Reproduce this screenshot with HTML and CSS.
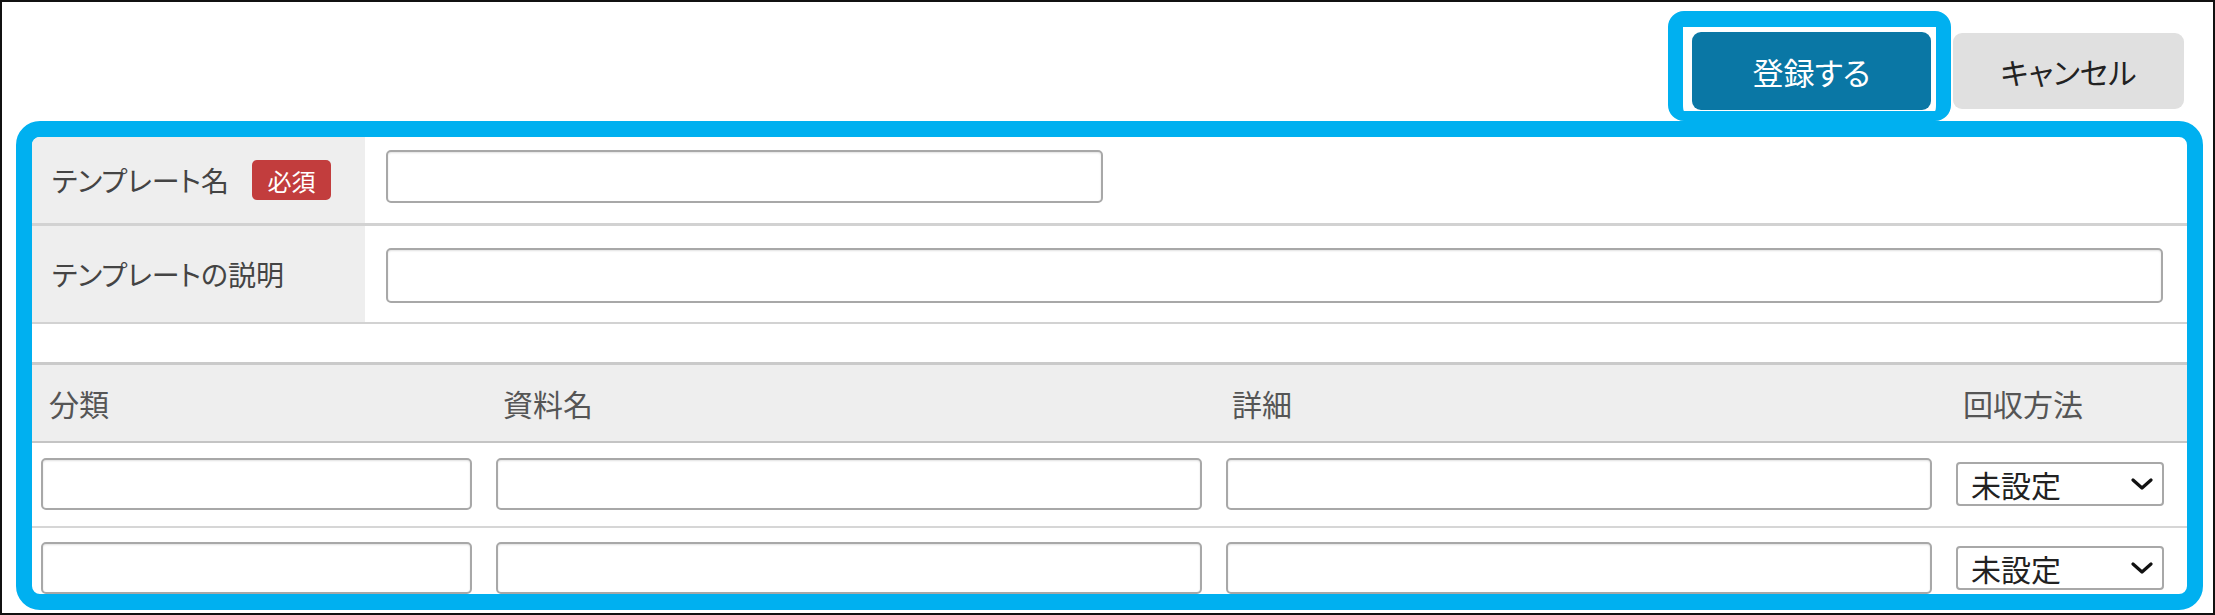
FILE: index.html
```html
<!DOCTYPE html>
<html lang="ja">
<head>
<meta charset="utf-8">
<link rel="stylesheet" href="styles.css">
</head>
<body>
<div class="frame">
  <div class="topbar">
    <div class="hl"><button class="btn primary">登録する</button></div>
    <button class="btn cancel">キャンセル</button>
  </div>
  <div class="panel">
    <div class="form-row r1">
      <div class="label">テンプレート名<span class="badge">必須</span></div>
      <div class="field"><input class="input name" type="text"></div>
    </div>
    <div class="form-row r2">
      <div class="label">テンプレートの説明</div>
      <div class="field"><input class="input desc" type="text"></div>
    </div>
    <div class="spacer"></div>
    <div class="grid head">
      <div class="h h1">分類</div>
      <div class="h h2">資料名</div>
      <div class="h h3">詳細</div>
      <div class="h h4">回収方法</div>
    </div>
    <div class="grid item ra">
      <input class="input cell" type="text">
      <input class="input cell" type="text">
      <input class="input cell" type="text">
      <div class="select"><span>未設定</span><svg width="22" height="12" viewBox="0 0 22 12"><polyline points="2,2 11,10 20,2" fill="none" stroke="#111" stroke-width="3.2" stroke-linecap="round" stroke-linejoin="round"/></svg></div>
    </div>
    <div class="grid item rb">
      <input class="input cell" type="text">
      <input class="input cell" type="text">
      <input class="input cell" type="text">
      <div class="select"><span>未設定</span><svg width="22" height="12" viewBox="0 0 22 12"><polyline points="2,2 11,10 20,2" fill="none" stroke="#111" stroke-width="3.2" stroke-linecap="round" stroke-linejoin="round"/></svg></div>
    </div>
  </div>
</div>
</body>
</html>
```
FILE: styles.css
```css
* { box-sizing: border-box; }
html, body { margin: 0; padding: 0; background: #fff; }
body {
  font-family: "Noto Sans CJK JP", "Noto Sans", sans-serif;
  font-feature-settings: "palt";
}
.frame {
  width: 2215px;
  height: 615px;
  border: 2px solid #111;
  display: flex;
  flex-direction: column;
  overflow: hidden;
}
.topbar {
  height: 119px;
  flex: none;
  display: flex;
  justify-content: flex-end;
  align-items: flex-start;
  padding: 9px 29px 0 0;
}
.hl {
  height: 110px;
  border-style: solid;
  border-color: #00b0f0;
  border-width: 16px 15px 10px 15px;
  border-radius: 16px;
  padding: 5px 5px 1px 9px;
  background: #fff;
}
.btn {
  font-family: inherit;
  font-feature-settings: "palt";
  border: none;
  margin: 0;
  padding: 0;
  font-size: 31px;
  display: flex;
  align-items: center;
  justify-content: center;
}
.primary {
  width: 239px;
  height: 78px;
  background: #0a77a5;
  color: #fff;
  border-radius: 9px;
}
.cancel {
  width: 231px;
  height: 76px;
  margin: 22px 0 0 2px;
  background: #e0e0e0;
  color: #222;
  border-radius: 9px;
  font-size: 30px;
}
.panel {
  flex: none;
  height: 489px;
  margin: 0 10px 0 14px;
  border: 16px solid #00b0f0;
  border-radius: 24px;
  overflow: hidden;
  background: #fff;
}
.form-row {
  display: flex;
  border-bottom: 3px solid #d2d2d2;
}
.r1 { height: 89px; }
.r2 { height: 98px; border-bottom-width: 2px; }
.label {
  width: 333px;
  flex: none;
  background: #eeeeee;
  display: flex;
  align-items: center;
  padding-left: 20px;
  font-size: 28px;
  color: #444;
}
.badge {
  margin-left: 23px;
  background: #c23d3d;
  color: #fff;
  font-size: 24px;
  height: 40px;
  width: 79px;
  border-radius: 5px;
  display: flex;
  align-items: center;
  justify-content: center;
}
.field { padding-left: 21px; }
.r1 .field { padding-top: 13px; }
.r2 .field { padding-top: 22px; }
.input {
  display: block;
  margin: 0;
  padding: 0;
  background: #fff;
  border: 2px solid #a8a8a8;
  border-radius: 5px;
  box-shadow: inset 0 1px 2px rgba(0,0,0,0.12);
  font: inherit;
}
.name { width: 717px; height: 53px; }
.desc { width: 1777px; height: 55px; }
.spacer { height: 38px; }
.grid {
  display: grid;
  grid-template-columns: 431px 706px 706px 208px;
  column-gap: 24px;
  padding: 0 23px 0 9px;
}
.head {
  height: 81px;
  background: #eeeeee;
  border-top: 3px solid #cacaca;
  border-bottom: 2px solid #c4c4c4;
  align-items: center;
  font-size: 30px;
  color: #555;
}
.h1 { padding-left: 8px; }
.h2 { padding-left: 7px; }
.h3 { padding-left: 6px; }
.h4 { padding-left: 7px; }
.item {
  height: 85px;
  align-items: start;
  border-bottom: 2px solid #d6d6d6;
}
.item .cell { height: 52px; margin-top: 15px; width: 100%; }
.rb .cell { margin-top: 14px; }
.select {
  height: 44px;
  margin-top: 19px;
  border: 2px solid #a8a8a8;
  border-radius: 4px;
  background: #fff;
  display: flex;
  align-items: center;
  justify-content: space-between;
  padding: 0 9px 0 13px;
  font-size: 30px;
  color: #222;
}
.rb .select { margin-top: 18px; }
.select svg { display: block; }
```
